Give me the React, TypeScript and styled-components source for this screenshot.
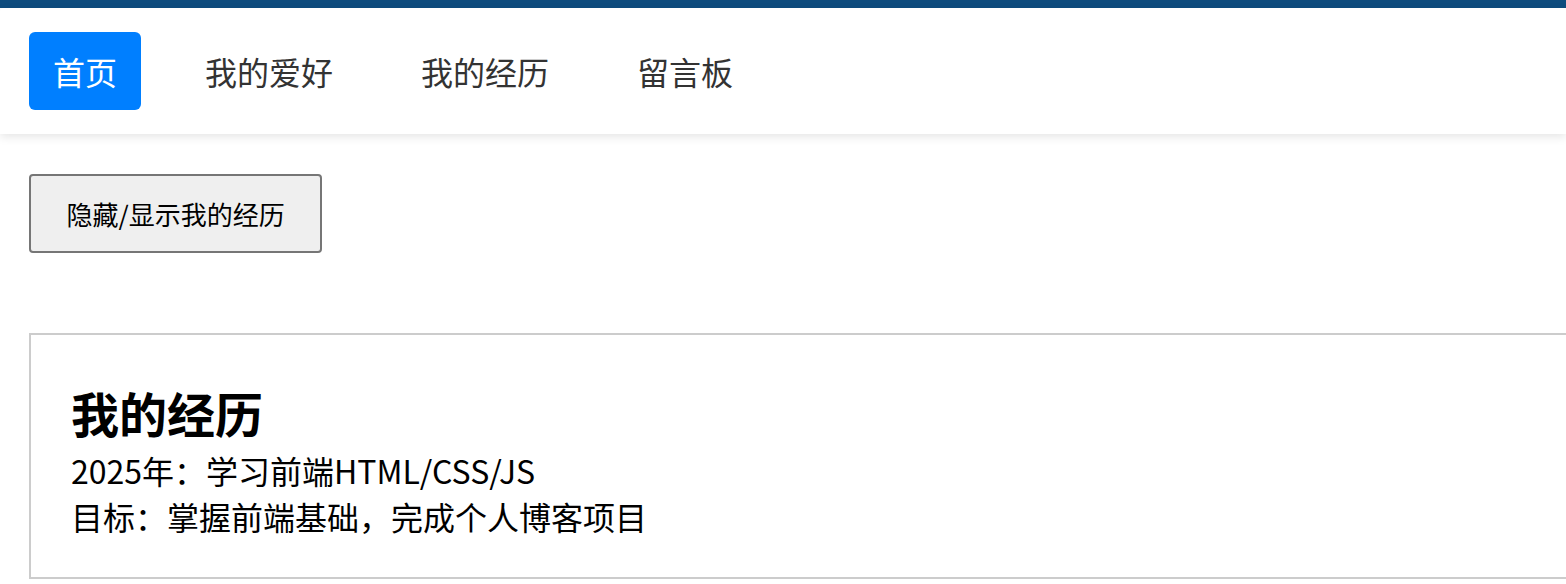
import React, { useState } from 'react';
import styled, { createGlobalStyle } from 'styled-components';

const GlobalStyle = createGlobalStyle`
  html, body {
    margin: 0;
    padding: 0;
    background: #fff;
    overflow: hidden;
  }
  body {
    font-family: "Noto Sans CJK SC", "Noto Sans", sans-serif;
  }
`;

const TopBar = styled.div`
  height: 8px;
  background: #0e4c7e;
`;

const NavBar = styled.nav`
  display: flex;
  align-items: center;
  gap: 40px;
  padding: 24px 29px;
  background: #fff;
  border-top-left-radius: 4px;
  box-shadow: 0 3px 10px rgba(0, 0, 0, 0.1);
`;

const NavItem = styled.a<{ $active?: boolean }>`
  display: block;
  padding: 16px 24px;
  border-radius: 6px;
  font-size: 32px;
  line-height: normal;
  text-decoration: none;
  color: ${({ $active }) => ($active ? '#fff' : '#333')};
  background: ${({ $active }) => ($active ? '#007fff' : 'transparent')};
  cursor: pointer;
`;

const Main = styled.main`
  padding: 40px 29px;
`;

const ToggleButton = styled.button`
  display: block;
  padding: 19px 35.5px;
  font-family: "Noto Sans CJK SC", "Noto Sans", sans-serif;
  font-size: 26px;
  line-height: normal;
  color: #000;
  background: #efefef;
  border: 2px solid #767676;
  border-radius: 4px;
  cursor: pointer;
`;

const ExperienceCard = styled.section`
  width: 1560px;
  margin-top: 80px;
  padding: 42px 40px 38px;
  border: 2px solid #ccc;
  color: #000;
`;

const CardTitle = styled.h2`
  margin: 0;
  font-size: 48px;
  font-weight: 700;
  line-height: normal;
`;

const CardLine = styled.p`
  margin: 0;
  font-size: 32px;
  line-height: normal;
`;

const navItems = ['首页', '我的爱好', '我的经历', '留言板'];

const App: React.FC = () => {
  const [showExp, setShowExp] = useState(true);

  return (
    <>
      <GlobalStyle />
      <TopBar />
      <NavBar>
        {navItems.map((item, i) => (
          <NavItem key={item} $active={i === 0}>
            {item}
          </NavItem>
        ))}
      </NavBar>
      <Main>
        <ToggleButton onClick={() => setShowExp(!showExp)}>
          隐藏/显示我的经历
        </ToggleButton>
        {showExp && (
          <ExperienceCard>
            <CardTitle>我的经历</CardTitle>
            <CardLine>2025年：学习前端HTML/CSS/JS</CardLine>
            <CardLine>目标：掌握前端基础，完成个人博客项目</CardLine>
          </ExperienceCard>
        )}
      </Main>
    </>
  );
};

export default App;
